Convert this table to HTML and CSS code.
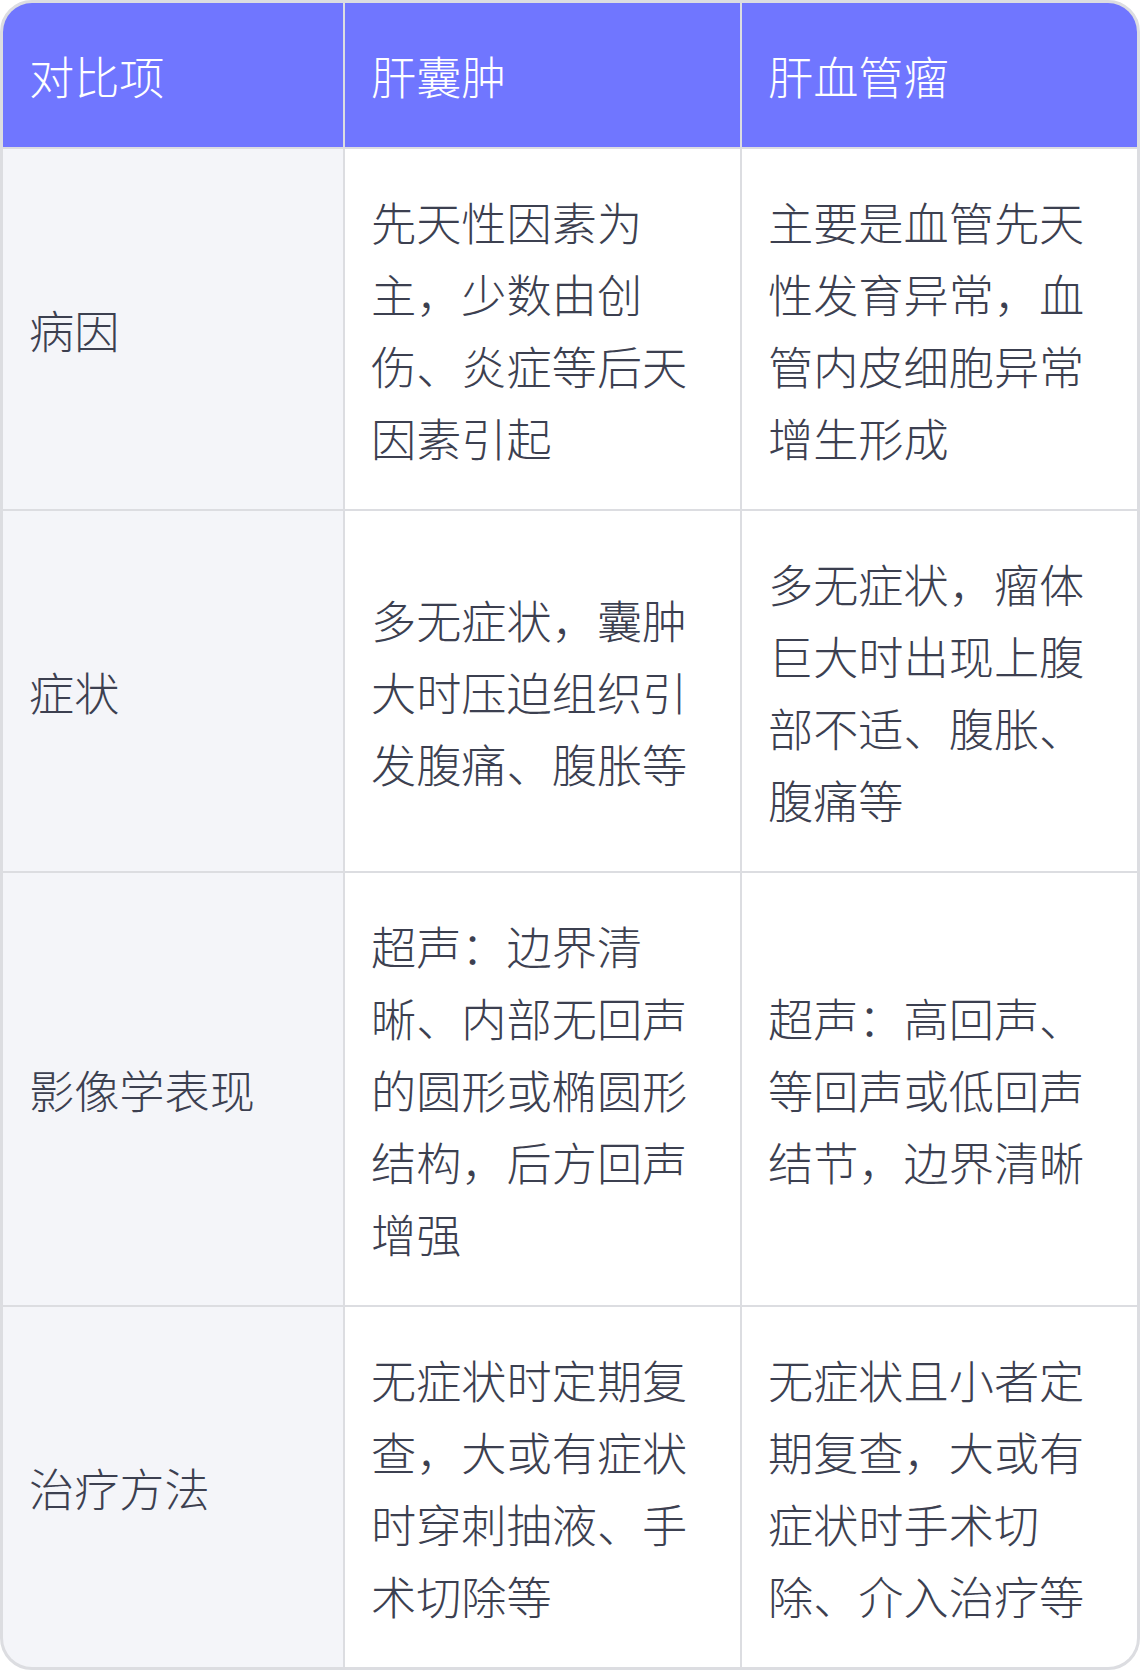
FILE: index.html
```html
<!DOCTYPE html>
<html lang="zh-CN">
<head>
<meta charset="utf-8">
<title>肝囊肿与肝血管瘤对比</title>
<link rel="stylesheet" href="styles.css">
</head>
<body>
<div class="table">
  <div class="cell head">对比项</div>
  <div class="cell head">肝囊肿</div>
  <div class="cell head">肝血管瘤</div>

  <div class="cell label">病因</div>
  <div class="cell">先天性因素为主，少数由创伤、炎症等后天因素引起</div>
  <div class="cell">主要是血管先天性发育异常，血管内皮细胞异常增生形成</div>

  <div class="cell label">症状</div>
  <div class="cell">多无症状，囊肿大时压迫组织引发腹痛、腹胀等</div>
  <div class="cell">多无症状，瘤体巨大时出现上腹部不适、腹胀、腹痛等</div>

  <div class="cell label">影像学表现</div>
  <div class="cell">超声：边界清晰、内部无回声的圆形或椭圆形结构，后方回声增强</div>
  <div class="cell">超声：高回声、等回声或低回声结节，边界清晰</div>

  <div class="cell label">治疗方法</div>
  <div class="cell">无症状时定期复查，大或有症状时穿刺抽液、手术切除等</div>
  <div class="cell">无症状且小者定期复查，大或有症状时手术切除、介入治疗等</div>
</div>
</body>
</html>
```

FILE: styles.css
```css
html, body {
  margin: 0;
  padding: 0;
  background: #ffffff;
}

.table {
  width: 1140px;
  box-sizing: border-box;
  border: 3px solid #dcdde1;
  border-radius: 32px;
  overflow: hidden;
  background: #dcdde1;
  display: grid;
  grid-template-columns: 340px 395px 1fr;
  gap: 2px;
  font-family: "Noto Sans CJK SC", "Noto Sans", sans-serif;
  font-weight: 300;
}

.cell {
  background: #ffffff;
  color: #3c4050;
  font-size: 45.2px;
  line-height: 72px;
  padding: 37px 26px 35px 26px;
  display: flex;
  align-items: center;
}

.cell.head {
  background: #7076ff;
  color: #ffffff;
}

.cell.label {
  background: #f4f5f9;
}
```
